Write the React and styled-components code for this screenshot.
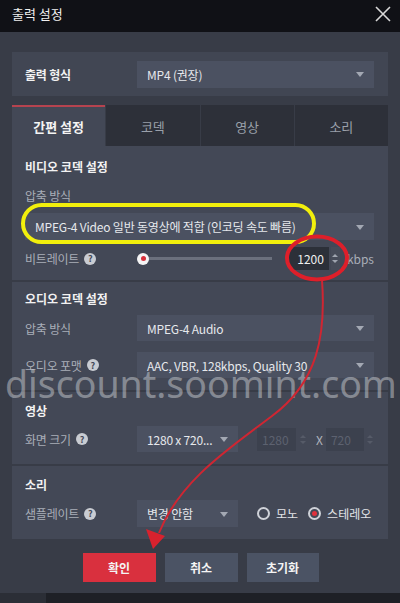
import React from "react";
import styled, { createGlobalStyle } from "styled-components";

const GlobalStyle = createGlobalStyle`
  html, body { margin: 0; padding: 0; background: #383c47; }
  body { font-family: "Noto Sans CJK KR", "Noto Sans", sans-serif; }
  * { box-sizing: border-box; }
`;

const Window = styled.div`
  position: relative;
  width: 400px;
  height: 603px;
  background: #383c47;
  display: flex;
  flex-direction: column;
  overflow: hidden;
`;

const TitleBar = styled.div`
  height: 32px;
  flex: none;
  background: #101116;
  display: flex;
  align-items: center;
  justify-content: space-between;
  padding: 0 8px 5px 12px;
  color: #f0f0f0;
  font-size: 13px;
`;

const Body = styled.div`
  padding: 20px 12px 0;
  display: flex;
  flex-direction: column;
`;

const FormatPanel = styled.div`
  height: 44px;
  background: #414653;
  display: flex;
  align-items: center;
  padding: 0 14px 0 13px;
`;

const Label = styled.div`
  width: 112px;
  flex: none;
  display: flex;
  align-items: center;
  gap: 5px;
  font-size: 12px;
  letter-spacing: -0.2px;
  white-space: nowrap;
  color: ${(p) => (p.$strong ? "#f2f2f2" : "#a9aeb8")};
  font-weight: ${(p) => (p.$strong ? 700 : 400)};
`;

const Select = styled.div`
  position: relative;
  height: ${(p) => p.$h || 26}px;
  width: ${(p) => (p.$w ? `${p.$w}px` : "auto")};
  flex: ${(p) => (p.$w ? "none" : "1")};
  background: #4b5161;
  color: #e6e8ec;
  font-size: 12px;
  letter-spacing: -0.2px;
  display: flex;
  align-items: center;
  padding-left: 10px;
  white-space: nowrap;
  &::after {
    content: "";
    position: absolute;
    right: 10px;
    top: 50%;
    margin-top: -2px;
    border-left: 4.5px solid transparent;
    border-right: 4.5px solid transparent;
    border-top: 5px solid #a3a8b3;
  }
`;

const Tabs = styled.div`
  margin-top: 9px;
  display: flex;
  gap: 1px;
  height: 41px;
`;

const Tab = styled.div`
  flex: 1;
  display: flex;
  align-items: center;
  justify-content: center;
  font-size: 13px;
  background: ${(p) => (p.$active ? "#434856" : "#2d3039")};
  color: ${(p) => (p.$active ? "#f4f4f4" : "#9aa0aa")};
  font-weight: ${(p) => (p.$active ? 700 : 400)};
  border-top: 2px solid ${(p) => (p.$active ? "#b6434f" : "#2d3039")};
`;

const Content = styled.div`
  background: #434856;
  display: flex;
  flex-direction: column;
`;

const Section = styled.div`
  padding: ${(p) => p.$pad || "10px 14px 13px 13px"};
  display: flex;
  flex-direction: column;
  & + & {
    border-top: 2px solid #383c47;
  }
`;

const Heading = styled.div`
  font-size: 12px;
  font-weight: 700;
  color: #f2f2f2;
  line-height: 18px;
`;

const SubLabel = styled.div`
  font-size: 12px;
  letter-spacing: -0.2px;
  color: #a9aeb8;
  line-height: 18px;
  margin-top: 11px;
`;

const Row = styled.div`
  display: flex;
  align-items: center;
  height: ${(p) => p.$h || 26}px;
  margin-top: ${(p) => p.$mt ?? 11}px;
`;

const Help = styled.span`
  width: 12px;
  height: 12px;
  border-radius: 50%;
  background: #c9ccd2;
  color: #434856;
  font-size: 9px;
  font-weight: 700;
  display: inline-flex;
  align-items: center;
  justify-content: center;
  line-height: 1;
`;

const Slider = styled.div`
  position: relative;
  width: 136px;
  height: 14px;
  display: flex;
  align-items: center;
  &::before {
    content: "";
    position: absolute;
    left: 6px;
    right: 0;
    height: 3px;
    background: #6b707d;
  }
`;

const Thumb = styled.div`
  position: relative;
  width: 12px;
  height: 12px;
  border-radius: 50%;
  background: #f4f4f4;
  display: flex;
  align-items: center;
  justify-content: center;
  &::after {
    content: "";
    width: 5px;
    height: 5px;
    border-radius: 50%;
    background: #d8303b;
  }
`;

const NumBox = styled.div`
  display: flex;
  align-items: center;
  margin-left: ${(p) => p.$ml || 0}px;
`;

const NumInput = styled.div`
  width: ${(p) => p.$w || 40}px;
  height: ${(p) => p.$h || 23}px;
  background: ${(p) => (p.$disabled ? "#3c414e" : "#2c3039")};
  color: ${(p) => (p.$disabled ? "#5d6270" : "#f0f0f0")};
  font-size: 12px;
  display: flex;
  align-items: center;
  justify-content: ${(p) => (p.$disabled ? "flex-start" : "flex-end")};
  padding: 0 5px;
`;

const Spin = styled.div`
  width: 9px;
  height: ${(p) => p.$h || 23}px;
  margin-left: 2px;
  background: ${(p) => (p.$disabled ? "transparent" : "#474c59")};
  display: flex;
  flex-direction: column;
  align-items: center;
  justify-content: center;
  gap: 3px;
  &::before,
  &::after {
    content: "";
    border-left: 3px solid transparent;
    border-right: 3px solid transparent;
  }
  &::before {
    border-bottom: 3px solid ${(p) => (p.$disabled ? "#565b68" : "#a0a5b0")};
  }
  &::after {
    border-top: 3px solid ${(p) => (p.$disabled ? "#565b68" : "#a0a5b0")};
  }
`;

const Unit = styled.span`
  font-size: 12px;
  color: ${(p) => p.$color || "#a9aeb8"};
  margin: ${(p) => p.$m || "0 0 0 7px"};
`;

const Radio = styled.span`
  flex: none;
  width: 13px;
  height: 13px;
  border-radius: 50%;
  border: 2px solid #cfd2d8;
  display: inline-flex;
  align-items: center;
  justify-content: center;
  margin: ${(p) => p.$m || "0"};
  &::after {
    content: "";
    width: 5px;
    height: 5px;
    border-radius: 50%;
    background: ${(p) => (p.$on ? "#e0313c" : "transparent")};
  }
`;

const RadioText = styled.span`
  font-size: 12px;
  color: #e2e4e8;
  margin-left: 6px;
  white-space: nowrap;
`;

const Buttons = styled.div`
  display: flex;
  justify-content: center;
  gap: 9px;
  margin-top: 14px;
  padding-left: 1px;
`;

const Button = styled.div`
  width: ${(p) => p.$w || 73}px;
  height: 29px;
  background: ${(p) => (p.$primary ? "#d9303e" : "#4b5364")};
  color: #f4f4f4;
  font-size: 12px;
  font-weight: 700;
  display: flex;
  align-items: center;
  justify-content: center;
`;

const Footer = styled.div`
  margin-top: auto;
  height: 10px;
  background: #1e2026;
  display: flex;
  &::before {
    content: "";
    width: 46px;
    background: #2b2e36;
  }
`;

const Watermark = styled.div`
  position: absolute;
  left: 5px;
  top: 358px;
  font-family: "Noto Sans", "Open Sans", sans-serif;
  font-size: 37.5px;
  color: rgba(230, 232, 236, 0.42);
  pointer-events: none;
  white-space: nowrap;
`;

const Overlay = styled.svg`
  position: absolute;
  left: 0;
  top: 0;
  pointer-events: none;
`;

const Close = () => (
  <svg width="18" height="18" viewBox="0 0 18 18">
    <path d="M2 2 L16 16 M16 2 L2 16" stroke="#d8d8d8" strokeWidth="1.6" />
  </svg>
);

export default function App() {
  return (
    <Window>
      <GlobalStyle />
      <TitleBar>
        <span>출력 설정</span>
        <Close />
      </TitleBar>
      <Body>
        <FormatPanel>
          <Label $strong>출력 형식</Label>
          <Select $h={27}>MP4 (권장)</Select>
        </FormatPanel>

        <Tabs>
          <Tab $active>간편 설정</Tab>
          <Tab>코덱</Tab>
          <Tab>영상</Tab>
          <Tab>소리</Tab>
        </Tabs>

        <Content>
          <Section $pad="12px 14px 10px 13px">
            <Heading>비디오 코덱 설정</Heading>
            <SubLabel>압축 방식</SubLabel>
            <Row $mt={8} $h={27}>
              <Select $h={27}>MPEG-4 Video 일반 동영상에 적합 (인코딩 속도 빠름)</Select>
            </Row>
            <Row $mt={7} $h={23}>
              <Label>
                비트레이트 <Help>?</Help>
              </Label>
              <Slider>
                <Thumb />
              </Slider>
              <NumBox $ml={17}>
                <NumInput>1200</NumInput>
                <Spin />
              </NumBox>
              <Unit>kbps</Unit>
            </Row>
          </Section>

          <Section $pad="8px 14px 12px 13px">
            <Heading>오디오 코덱 설정</Heading>
            <Row $mt={7}>
              <Label>압축 방식</Label>
              <Select>MPEG-4 Audio</Select>
            </Row>
            <Row>
              <Label>
                오디오 포맷 <Help>?</Help>
              </Label>
              <Select>AAC, VBR, 128kbps, Quality 30</Select>
            </Row>
          </Section>

          <Section $pad="10px 14px 12px 13px">
            <Heading>영상</Heading>
            <Row $mt={6}>
              <Label>
                화면 크기 <Help>?</Help>
              </Label>
              <Select $w={101}>1280 x 720...</Select>
              <NumBox $ml={19}>
                <NumInput $disabled $w={39} $h={23}>1280</NumInput>
                <Spin $disabled />
              </NumBox>
              <Unit $color="#b0b4bd" $m="0 0 0 9px">X</Unit>
              <NumBox $ml={3}>
                <NumInput $disabled $w={38} $h={23}>720</NumInput>
                <Spin $disabled />
              </NumBox>
            </Row>
          </Section>

          <Section $pad="10px 14px 12px 13px">
            <Heading>소리</Heading>
            <Row $mt={6} $h={27}>
              <Label>
                샘플레이트 <Help>?</Help>
              </Label>
              <Select $w={101} $h={27}>변경 안함</Select>
              <Radio $m="0 0 0 19px" />
              <RadioText>모노</RadioText>
              <Radio $on $m="0 0 0 10px" />
              <RadioText>스테레오</RadioText>
            </Row>
          </Section>
        </Content>

        <Buttons>
          <Button $primary>확인</Button>
          <Button>취소</Button>
          <Button $w={72}>초기화</Button>
        </Buttons>
      </Body>
      <Footer />

      <Watermark>discount.soomint.com</Watermark>

      <Overlay width="400" height="603" viewBox="0 0 400 603">
        <rect
          x="23"
          y="205"
          width="291"
          height="37"
          rx="18.5"
          fill="none"
          stroke="#f2ef0c"
          strokeWidth="4"
        />
        <ellipse
          cx="317"
          cy="258"
          rx="30"
          ry="21.5"
          fill="none"
          stroke="#de1f2a"
          strokeWidth="4"
        />
        <path
          d="M322 280 C326 335 318 382 272 416 C230 448 180 480 159 533"
          fill="none"
          stroke="#cf2632"
          strokeWidth="2"
        />
        <polygon points="146,529 165,536 153,549" fill="#d8222e" />
      </Overlay>
    </Window>
  );
}
